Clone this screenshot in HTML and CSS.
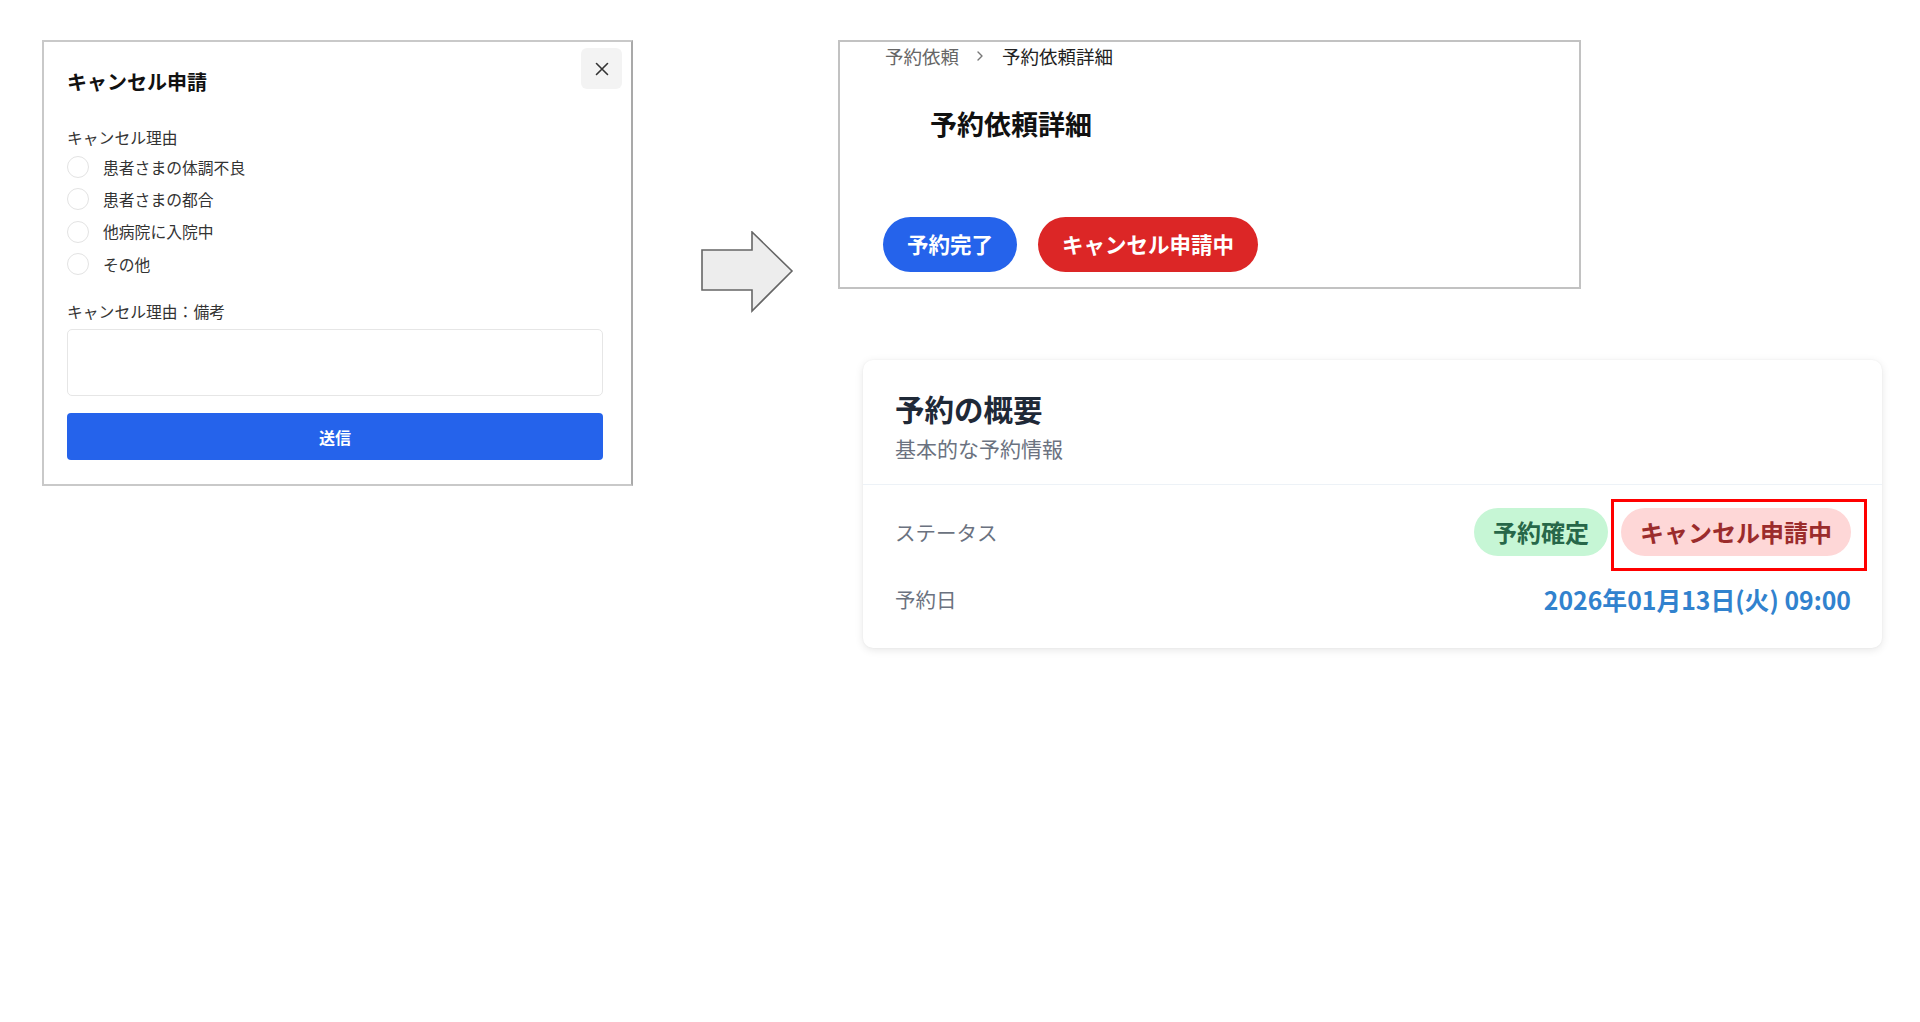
FILE: index.html
```html
<!DOCTYPE html>
<html lang="ja">
<head>
<meta charset="utf-8">
<title>キャンセル申請</title>
<link rel="stylesheet" href="styles.css">
</head>
<body>
<div class="page">
  <section class="modal">
    <button class="close" type="button" aria-label="閉じる">
      <svg width="14" height="14" viewBox="0 0 14 14"><path d="M1.5 1.5 L12.5 12.5 M12.5 1.5 L1.5 12.5" stroke="#333" stroke-width="1.6" stroke-linecap="round" fill="none"/></svg>
    </button>
    <h2 class="modal-title">キャンセル申請</h2>
    <div class="field-label reason-label">キャンセル理由</div>
    <ul class="radios">
      <li class="radio-row"><span class="radio"></span><span>患者さまの体調不良</span></li>
      <li class="radio-row"><span class="radio"></span><span>患者さまの都合</span></li>
      <li class="radio-row"><span class="radio"></span><span>他病院に入院中</span></li>
      <li class="radio-row"><span class="radio"></span><span>その他</span></li>
    </ul>
    <div class="field-label note-label">キャンセル理由：備考</div>
    <div class="textarea"></div>
    <button class="submit" type="button">送信</button>
  </section>

  <div class="arrow">
    <svg width="94" height="84" viewBox="0 0 94 84"><path d="M2 19 H52 V1 L92 40 L52 80 V59 H2 Z" fill="#ededed" stroke="#666" stroke-width="1.6" stroke-linejoin="miter"/></svg>
  </div>

  <div class="right">
    <section class="detail">
      <nav class="crumbs">
        <span class="crumb-muted">予約依頼</span>
        <svg class="chev" width="8" height="12" viewBox="0 0 8 12"><path d="M2 2 L6 6 L2 10" stroke="#777" stroke-width="1.4" fill="none" stroke-linecap="round" stroke-linejoin="round"/></svg>
        <span class="crumb-current">予約依頼詳細</span>
      </nav>
      <h1 class="detail-title">予約依頼詳細</h1>
      <div class="pill-row">
        <span class="pill pill-blue">予約完了</span>
        <span class="pill pill-red">キャンセル申請中</span>
      </div>
    </section>

    <section class="card">
      <header class="card-head">
        <h2 class="card-title">予約の概要</h2>
        <p class="card-sub">基本的な予約情報</p>
      </header>
      <div class="card-body">
        <div class="row">
          <span class="row-label">ステータス</span>
          <div class="badges">
            <span class="badge badge-green">予約確定</span>
            <span class="badge badge-red">キャンセル申請中<span class="highlight"></span></span>
          </div>
        </div>
        <div class="row">
          <span class="row-label">予約日</span>
          <span class="date">2026年01月13日(火) 09:00</span>
        </div>
      </div>
    </section>
  </div>
</div>
</body>
</html>
```

FILE: styles.css
```css
* { box-sizing: border-box; }
html, body { margin: 0; padding: 0; background: #fff; }
body {
  font-family: "Noto Sans CJK JP", "Noto Sans", sans-serif;
  color: #222;
}
.page {
  display: flex;
  align-items: flex-start;
  width: 1920px;
  height: 1022px;
}

/* ---------- modal ---------- */
.modal {
  position: relative;
  margin-left: 42px;
  margin-top: 40px;
  width: 591px;
  border: 2px solid #c9c9c9;
  border-right-color: #a9a9a9;
  background: #fff;
  padding: 26px 28px 24px 23px;
}
.close {
  position: absolute;
  top: 6px;
  right: 9px;
  width: 41px;
  height: 41px;
  border: none;
  border-radius: 6px;
  background: #f3f3f3;
  display: flex;
  align-items: center;
  justify-content: center;
  padding: 0;
}
.modal-title {
  margin: 0 0 30px;
  font-size: 20px;
  line-height: 28px;
  font-weight: 700;
  color: #111;
}
.field-label {
  font-size: 15.8px;
  line-height: 24px;
  color: #333;
}
.reason-label { margin-bottom: 1px; }
.radios {
  list-style: none;
  margin: 0;
  padding: 0;
}
.radio-row {
  height: 32.3px;
  display: flex;
  align-items: center;
  gap: 14px;
  font-size: 15.8px;
  color: #333;
}
.radio {
  width: 22px;
  height: 22px;
  border-radius: 50%;
  border: 1px solid #e3e3e3;
  background: #fff;
  flex: none;
}
.note-label { margin-top: 19.5px; }
.textarea {
  margin-top: 5.5px;
  height: 67px;
  border: 1px solid #e6e6e6;
  border-radius: 5px;
}
.submit {
  display: block;
  width: 100%;
  margin-top: 17px;
  height: 47px;
  border: none;
  border-radius: 4px;
  background: #2563eb;
  color: #fff;
  font-family: inherit;
  font-size: 16px;
  font-weight: 600;
}

/* ---------- arrow ---------- */
.arrow {
  margin-left: 67px;
  margin-top: 231px;
  line-height: 0;
}

/* ---------- right column ---------- */
.right {
  margin-left: 44px;
  margin-top: 40px;
  display: flex;
  flex-direction: column;
  align-items: flex-start;
}
.detail {
  width: 743px;
  height: 249px;
  border: 2px solid #c2c2c2;
  padding: 0 0 0 43px;
}
.crumbs {
  display: flex;
  align-items: center;
  height: 28px;
  margin-left: 2px;
  font-size: 18.5px;
}
.crumb-muted { color: #666; }
.chev { margin: 0 18px 0 17px; }
.crumb-current { color: #222; }
.detail-title {
  margin: 36px 0 0 47px;
  font-size: 27px;
  line-height: 36px;
  font-weight: 700;
  color: #111;
}
.pill-row {
  display: flex;
  gap: 21px;
  margin-top: 75px;
}
.pill {
  height: 55px;
  display: inline-flex;
  align-items: center;
  padding: 0 24px 3px;
  border-radius: 28px;
  color: #fff;
  font-size: 21.5px;
  font-weight: 700;
}
.pill-blue { background: #2563eb; }
.pill-red { background: #dc2626; }

/* ---------- card ---------- */
.card {
  margin-top: 71px;
  margin-left: 25px;
  width: 1019px;
  background: #fff;
  border-radius: 10px;
  box-shadow: 0 2px 8px rgba(0,0,0,0.10), 0 0 2px rgba(0,0,0,0.05);
}
.card-head {
  padding: 28px 32px 20px;
  border-bottom: 1px solid #edf2f7;
}
.card-title {
  margin: 0;
  font-size: 29.5px;
  line-height: 40px;
  font-weight: 700;
  color: #1f2937;
}
.card-sub {
  margin: 5px 0 0;
  font-size: 21px;
  line-height: 31px;
  color: #6b7280;
}
.card-body {
  padding: 23px 31px 25px 32px;
  display: flex;
  flex-direction: column;
  gap: 19px;
}
.row {
  display: flex;
  align-items: center;
  justify-content: space-between;
  min-height: 48px;
}
.row-label {
  font-size: 20.5px;
  color: #6b7280;
}
.badges {
  display: flex;
  gap: 13px;
}
.badge {
  position: relative;
  height: 48px;
  display: inline-flex;
  align-items: center;
  padding: 0 19px 2px;
  border-radius: 24px;
  font-size: 24px;
  font-weight: 700;
}
.badge-green { background: #c6f6d5; color: #276749; }
.badge-red { background: #fed7d7; color: #9b2c2c; }
.highlight {
  position: absolute;
  left: -10px;
  top: -9px;
  right: -16px;
  bottom: -15px;
  border: 3px solid #ff0000;
}
.date {
  font-size: 24.8px;
  font-weight: 600;
  color: #3182ce;
}
```
